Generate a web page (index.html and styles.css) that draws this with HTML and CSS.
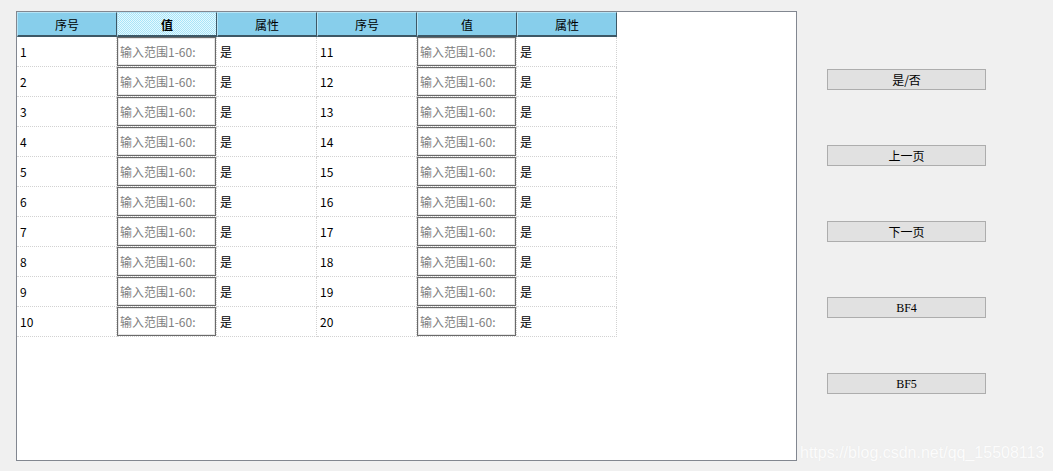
FILE: index.html
```html
<!DOCTYPE html>
<html>
<head>
<meta charset="utf-8">
<link rel="stylesheet" href="styles.css">
</head>
<body>
<div class="page">
  <div class="frame">
    <div class="grid" id="grid">
      <div class="hcell">序号</div>
      <div class="hcell sel">值</div>
      <div class="hcell">属性</div>
      <div class="hcell">序号</div>
      <div class="hcell">值</div>
      <div class="hcell">属性</div>
    </div>
  </div>
  <div class="side">
    <button class="btn cjk">是/否</button>
    <button class="btn cjk">上一页</button>
    <button class="btn cjk">下一页</button>
    <button class="btn lat">BF4</button>
    <button class="btn lat">BF5</button>
  </div>
  <div class="watermark">https://blog.csdn.net/qq_15508113</div>
</div>
<script>
  var g = document.getElementById('grid');
  for (var i = 1; i <= 10; i++) {
    [i, i + 10].forEach(function (n) {
      var a = document.createElement('div'); a.className = 'cell num'; a.textContent = n; g.appendChild(a);
      var b = document.createElement('div'); b.className = 'cell inp'; b.innerHTML = '<input class="field" placeholder="输入范围1-60:">'; g.appendChild(b);
      var c = document.createElement('div'); c.className = 'cell attr'; c.textContent = '是'; g.appendChild(c);
    });
  }
</script>
</body>
</html>
```

FILE: styles.css
```css
html, body {
  margin: 0;
  padding: 0;
  background: #f0f0f0;
  font-family: "Noto Sans CJK SC", "Noto Sans", sans-serif;
  font-size: 12px;
  color: #000;
}
.page {
  position: relative;
  width: 1053px;
  height: 471px;
  display: flex;
  align-items: flex-start;
}
.frame {
  margin: 11px 0 0 16px;
  width: 779px;
  height: 448px;
  border: 1px solid #828790;
  background: #fff;
}
.grid {
  display: grid;
  grid-template-columns: repeat(6, 100px);
  grid-template-rows: 25px;
  grid-auto-rows: 30px;
  width: 600px;
}
.hcell {
  box-sizing: border-box;
  background: #87ceeb;
  border-top: 1px solid #b5e3f5;
  border-left: 1px solid #b5e3f5;
  border-right: 1px solid #3d5866;
  border-bottom: 2px solid #3d5866;
  display: flex;
  align-items: center;
  justify-content: center;
  line-height: 1;
  padding-top: 1px;
}
.hcell.sel {
  background-color: #c8f1ff;
  background-image: repeating-conic-gradient(#a8e4f8 0 25%, #e4f9ff 0 50%);
  background-size: 2px 2px;
  font-weight: bold;
}
.cell {
  box-sizing: border-box;
  border-right: 1px dotted #d2d2d2;
  border-bottom: 1px dotted #d2d2d2;
  display: flex;
  align-items: center;
  line-height: 1;
}
.num { padding-left: 3px; }
.attr { padding-left: 3px; }
.inp { padding: 0; }
.field {
  box-sizing: border-box;
  width: 99px;
  height: 29px;
  margin: 0;
  border: 1px solid #6a6a6a;
  box-shadow: inset 0 0 0 1px #e6e6e6;
  padding: 0 0 0 2px;
  font-family: "Noto Sans CJK SC", "Noto Sans", sans-serif;
  font-size: 12px;
  background: #fff;
  outline: none;
}
.field::placeholder { color: #808080; }
.side {
  margin: 69px 0 0 30px;
  display: flex;
  flex-direction: column;
  gap: 55px;
}
.btn {
  box-sizing: border-box;
  width: 159px;
  height: 21px;
  margin: 0;
  padding: 0;
  border: 1px solid #adadad;
  background: #e1e1e1;
  color: #000;
  font-size: 12px;
  line-height: 1;
  border-radius: 0;
}
.btn.cjk { font-family: "Noto Sans CJK SC", sans-serif; }
.btn.lat { font-family: "Liberation Serif", serif; font-size: 12px; }
.watermark {
  position: absolute;
  left: 800px;
  top: 444px;
  font-family: "Liberation Sans", Arial, sans-serif;
  font-size: 16px;
  color: #ffffff;
  opacity: 0.8;
  text-shadow: 0 0 1px #e4e4e4;
  white-space: nowrap;
}
```
